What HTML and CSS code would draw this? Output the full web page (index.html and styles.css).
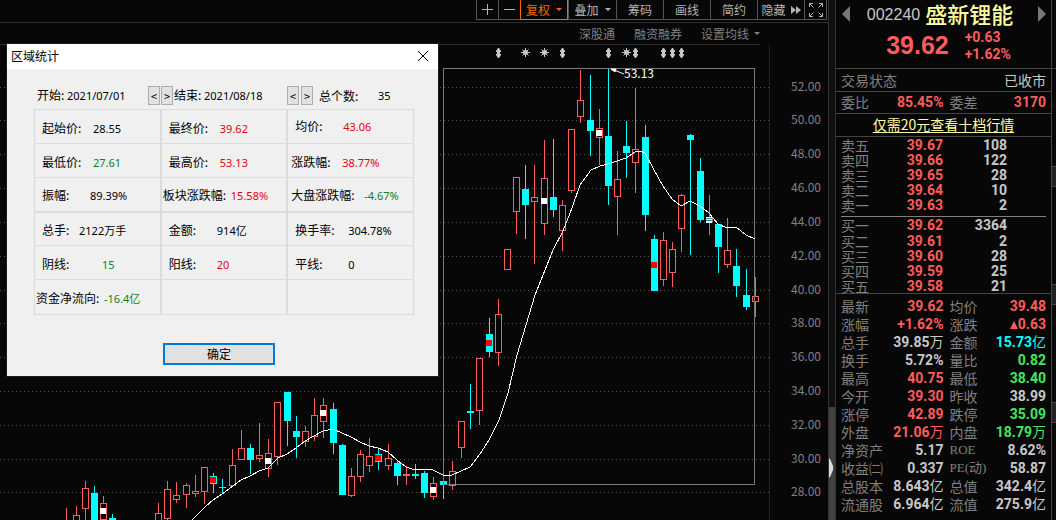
FILE: index.html
```html
<!DOCTYPE html>
<html lang="zh-CN">
<head>
<meta charset="utf-8">
<title>盛新锂能 002240</title>
<link rel="stylesheet" href="styles.css">
</head>
<body>
<div class="app">
  <main class="chart-pane">
    <nav class="toolbar">
      <button class="tool tool-icon" aria-label="放大"><svg width="13" height="13" viewBox="0 0 13 13"><path d="M1 6.5h11M6.5 1v11"/></svg></button>
      <button class="tool tool-icon" aria-label="缩小"><svg width="13" height="13" viewBox="0 0 13 13"><path d="M1 6.5h11"/></svg></button>
      <button class="tool tool-menu tool-active">复权<i class="caret"></i></button>
      <button class="tool tool-menu">叠加<i class="caret"></i></button>
      <button class="tool">筹码</button>
      <button class="tool">画线</button>
      <button class="tool">简约</button>
      <button class="tool tool-hide">隐藏<svg class="solid" width="10" height="8" viewBox="0 0 10 8"><path d="M0 0l5 4-5 4zM5 0l5 4-5 4z"/></svg></button>
      <button class="tool tool-icon" aria-label="全屏"><svg width="14" height="14" viewBox="0 0 14 14"><path d="M.5 4V.5H4M.5.5l4 4M10 .5h3.500V4M13.500.5l-4 4M.5 10v3.500H4M.5 13.500l4-4M10 13.500h3.500V10M13.500 13.500l-4-4"/></svg></button>
    </nav>
    <div class="subbar">
      <div class="links">
        <a href="#sgt">深股通</a>
        <a href="#rzrq">融资融券</a>
        <a href="#ma">设置均线<i class="caret"></i></a>
      </div>
    </div>
    <svg class="chart" id="chart" viewBox="0 45 828 475" preserveAspectRatio="xMaxYMin meet"></svg>

    <section class="dialog" role="dialog" aria-labelledby="dlg-title">
      <header class="dialog-head">
        <span id="dlg-title">区域统计</span>
        <button class="close" aria-label="关闭"><svg width="10" height="10" viewBox="0 0 10 10"><path d="M0 0l10 10M10 0L0 10"/></svg></button>
      </header>
      <div class="dialog-body">
        <div class="period">
          <span class="period-item">开始: <span class="num">2021/07/01</span></span>
          <span class="spin"><button>&lt;</button><button>&gt;</button></span>
          <span class="period-item">结束: <span class="num">2021/08/18</span></span>
          <span class="spin spin-wide"><button>&lt;</button><button>&gt;</button></span>
          <span class="total">总个数:</span><span class="num">35</span>
        </div>
        <table class="stats">
          <tr>
            <td><span class="k k-l">起始价:</span><span class="num">28.55</span></td>
            <td><span class="k k-l">最终价:</span><span class="num red">39.62</span></td>
            <td class="raised"><span class="k k-m">均价:</span><span class="num red">43.06</span></td>
          </tr>
          <tr>
            <td><span class="k k-l">最低价:</span><span class="num green">27.61</span></td>
            <td><span class="k k-l">最高价:</span><span class="num red">53.13</span></td>
            <td class="near"><span class="k k-l">涨跌幅:</span><span class="num red">38.77%</span></td>
          </tr>
          <tr>
            <td><span class="k k-m">振幅:</span><span class="num">89.39%</span></td>
            <td class="flush"><span class="k k-xl">板块涨跌幅:</span><span class="num red">15.58%</span></td>
            <td class="near"><span class="k k-xxl">大盘涨跌幅:</span><span class="num green">-4.67%</span></td>
          </tr>
          <tr class="group">
            <td><span class="k k-s">总手:</span><span class="num">2122万手</span></td>
            <td><span class="k k-m">金额:</span><span class="num">914亿</span></td>
            <td><span class="k k-w">换手率:</span><span class="num">304.78%</span></td>
          </tr>
          <tr>
            <td><span class="k k-xw">阴线:</span><span class="num green">15</span></td>
            <td><span class="k k-m">阳线:</span><span class="num red">20</span></td>
            <td><span class="k k-w">平线:</span><span class="num">0</span></td>
          </tr>
          <tr>
            <td class="flush"><span class="k k-xl">资金净流向:</span><span class="num green">-16.4亿</span></td>
            <td></td>
            <td></td>
          </tr>
        </table>
        <button class="ok">确定</button>
      </div>
    </section>
  </main>

  <div class="gutter"><div class="thumb"><svg width="4" height="20" viewBox="0 0 4 20"><path d="M0 0l1 1 3 7v4l-3 7-1 1z"/></svg></div></div>

  <aside class="quote">
    <header class="head">
      <button class="arrow prev" aria-label="上一只"></button>
      <h1><span class="code">002240</span><span class="name">盛新锂能</span></h1>
      <button class="arrow next" aria-label="下一只"></button>
      <div class="last">
        <span class="price">39.62</span>
        <span class="change"><span>+0.63</span><span>+1.62%</span></span>
      </div>
    </header>
    <div class="line spread"><span class="lb">交易状态</span><span class="state">已收市</span></div>
    <div class="line four"><span class="lb">委比</span><b class="up">85.45%</b><span class="lb">委差</span><b class="up">3170</b></div>
    <div class="line promo"><a href="#level2">仅需20元查看十档行情</a></div>
    <div class="book">
      <table>
        <tr><th>卖五</th><td class="up">39.67</td><td>108</td></tr>
        <tr><th>卖四</th><td class="up">39.66</td><td>122</td></tr>
        <tr><th>卖三</th><td class="up">39.65</td><td>28</td></tr>
        <tr><th>卖二</th><td class="up">39.64</td><td>10</td></tr>
        <tr><th>卖一</th><td class="up">39.63</td><td>2</td></tr>
      </table>
      <table class="bids">
        <tr><th>买一</th><td class="up">39.62</td><td>3364</td></tr>
        <tr><th>买二</th><td class="up">39.61</td><td>2</td></tr>
        <tr><th>买三</th><td class="up">39.60</td><td>28</td></tr>
        <tr><th>买四</th><td class="up">39.59</td><td>25</td></tr>
        <tr><th>买五</th><td class="up">39.58</td><td>21</td></tr>
      </table>
    </div>
    <div class="details">
      <div class="four"><span class="lb">最新</span><b class="up">39.62</b><span class="lb">均价</span><b class="up">39.48</b></div>
      <div class="four"><span class="lb">涨幅</span><b class="up">+1.62%</b><span class="lb">涨跌</span><b class="up"><i class="rise"></i>0.63</b></div>
      <div class="four"><span class="lb">总手</span><b>39.85<span class="unit">万</span></b><span class="lb">金额</span><b class="cyan">15.73<span class="unit">亿</span></b></div>
      <div class="four"><span class="lb">换手</span><b>5.72%</b><span class="lb">量比</span><b class="down">0.82</b></div>
      <div class="four"><span class="lb">最高</span><b class="up">40.75</b><span class="lb">最低</span><b class="down">38.40</b></div>
      <div class="four"><span class="lb">今开</span><b class="up">39.30</b><span class="lb">昨收</span><b>38.99</b></div>
      <div class="four"><span class="lb">涨停</span><b class="up">42.89</b><span class="lb">跌停</span><b class="down">35.09</b></div>
      <div class="four"><span class="lb">外盘</span><b class="up">21.06<span class="unit">万</span></b><span class="lb">内盘</span><b class="down">18.79<span class="unit">万</span></b></div>
      <div class="four"><span class="lb">净资产</span><b>5.17</b><span class="lb serif">ROE</span><b>8.62%</b></div>
      <div class="four"><span class="lb">收益㈡</span><b>0.337</b><span class="lb serif">PE(动)</span><b>58.87</b></div>
      <div class="four"><span class="lb">总股本</span><b>8.643<span class="unit">亿</span></b><span class="lb">总值</span><b>342.4<span class="unit">亿</span></b></div>
      <div class="four"><span class="lb">流通股</span><b>6.964<span class="unit">亿</span></b><span class="lb">流值</span><b>275.9<span class="unit">亿</span></b></div>
    </div>
  </aside>
  <div class="tabs"><i></i><i class="on"></i><i></i><i class="on"></i><i></i><i class="on"></i><i></i></div>
</div>
<script src="chart.js"></script>
</body>
</html>
```
FILE: styles.css
```css
* { box-sizing: border-box; }
body {
  margin: 0;
  background: #070707;
  color: #c8c8c8;
  font: 12px/16px "Noto Sans CJK SC", sans-serif;
}
button {
  margin: 0;
  padding: 0;
  border: 0;
  background: none;
  color: inherit;
  font: inherit;
}
a { color: inherit; text-decoration: none; }
.app {
  display: grid;
  grid-template-columns: minmax(0, 1fr) 8px 216px 4px;
  height: 100vh;
  min-height: 520px;
  overflow: hidden;
}

/* chart pane */
.chart-pane {
  position: relative;
  display: flex;
  flex-direction: column;
  min-width: 0;
  min-height: 0;
}
.toolbar {
  display: flex;
  justify-content: flex-end;
  height: 23px;
  padding: 0 1px 2px 0;
  border-bottom: 1px solid #2c2c2c;
}
.tool {
  display: flex;
  align-items: center;
  justify-content: center;
  width: 47px;
  gap: 5px;
  border: solid #555;
  border-width: 0 0 1px 1px;
  color: #b4b4b4;
}
.tool:last-child { border-right-width: 1px; width: 23px; }
.tool-icon { width: 22px; }
.tool-menu { width: 48px; gap: 6px; }
.tool-active { border-color: #f60; border-right-width: 1px; color: #f60; }
.tool svg { fill: none; stroke: #b4b4b4; }
.tool .solid { fill: #b4b4b4; stroke: none; }
.caret {
  display: inline-block;
  border: solid transparent;
  border-width: 3px 3px 0;
  border-top-color: currentColor;
}
.subbar {
  padding-right: 68px;
  height: 22px;
  color: #808080;
}
.links {
  display: flex;
  justify-content: flex-end;
  gap: 19px;
  height: 22px;
  line-height: 23px;
  border-bottom: 1px solid #2c2c2c;
}
.links a { display: flex; align-items: center; gap: 5px; }
.chart { display: block; width: 100%; flex: 1; min-height: 0; }
.chart text { font-size: 12px; fill: #808080; }
.chart .peak { fill: #fff; }
.frame { fill: none; stroke: #7a7a7a; }
.axis { stroke: #262626; }
.grid { stroke: #505050; stroke-dasharray: 1 3; }
.average { fill: none; stroke: #fff; }
.rising { fill: #070707; stroke: #ff5c5c; }
.falling { fill: #00ffff; stroke: #00ffff; }
.dividend { fill: #c8c8c8; }
.notice { fill: #c8c8c8; stroke: #c8c8c8; }

/* dialog */
.dialog {
  position: absolute;
  left: 7px;
  top: 44px;
  width: 431px;
  background: #f0f0f0;
  color: #000;
  box-shadow: 0 0 0 1px #1c1c1c;
}
.dialog-head {
  display: flex;
  align-items: center;
  justify-content: space-between;
  height: 25px;
  padding: 0 10px 2px 4px;
  background: #fff;
}
.close { display: flex; }
.close svg { stroke: #000; overflow: visible; }
.dialog-body { padding: 16px 24px 11px 27px; }
.num { font-family: "Noto Sans", "Noto Sans CJK SC", sans-serif; font-size: 11px; }
.period {
  display: flex;
  align-items: center;
  height: 21px;
  margin-bottom: 3px;
  padding-left: 3px;
}
.period-item { width: 111px; white-space: nowrap; }
.spin { display: flex; gap: 1px; width: 26px; }
.spin-wide { gap: 2px; width: 32px; }
.period-item + .spin-wide { margin-left: 2px; }
.spin button {
  width: 12px;
  height: 19px;
  border: 1px solid #adadad;
  background: #e1e1e1;
  font-size: 11px;
  line-height: 16px;
}
.total { width: 59px; }
.stats {
  width: 100%;
  table-layout: fixed;
  border-collapse: collapse;
}
.stats td {
  height: 34px;
  padding: 3px 0 0 7px;
  border: solid #dcdcdc;
  border-width: 1px 2px;
  white-space: nowrap;
}
.stats td:first-child { border-left-width: 1px; }
.stats td:last-child { border-right-width: 1px; }
.stats .group td { border-top-width: 2px; }
.stats tr:last-child td { height: 35px; }
.stats .near { padding-left: 3px; }
.stats .flush { padding-left: 1px; }
.stats .raised { padding-top: 0; }
.k { display: inline-block; }
.k-s { width: 37px; }
.k-m { width: 48px; }
.k-l { width: 51px; }
.k-w { width: 53px; }
.k-xw { width: 60px; }
.k-xl { width: 68px; }
.k-xxl { width: 73px; }
.red { color: #e60012; }
.green { color: #118022; }
.ok {
  display: block;
  width: 112px;
  height: 22px;
  margin: 28px auto 0 129px;
  border: 2px solid #0078d7;
  background: #e1e1e1;
}

/* scroll gutter */
.gutter {
  display: flex;
  align-items: flex-end;
  background: #101010;
  border: solid #333;
  border-width: 0 1px;
}
.thumb {
  display: flex;
  align-items: center;
  width: 100%;
  height: 113px;
  padding-top: 8px;
  background: #404040;
}
.thumb svg { fill: #ddd; }

/* quote panel */
.quote { border-right: 1px solid #444; }
.head {
  display: grid;
  grid-template-columns: 8px 1fr 8px;
  grid-template-rows: 28px 36px;
  align-items: center;
  height: 68px;
  padding: 0 5px 0 6px;
}
.head h1 {
  display: flex;
  align-items: center;
  justify-content: center;
  gap: 5px;
  height: 28px;
  margin: 0;
  padding-right: 8px;
  font-weight: 500;
}
.code { font: 16px/28px "Liberation Sans", sans-serif; padding-top: 1px; }
.name { font-size: 22px; line-height: 28px; height: 30px; color: #ffffa0; }
.arrow { border: solid transparent; border-width: 8px 0; width: 8px; height: 16px; }
.prev { border-right: 8px solid #777; }
.next { border-left: 8px solid #777; }
.last {
  grid-column: 1 / -1;
  display: flex;
  align-items: center;
  justify-content: center;
  gap: 16px;
  padding-left: 9px;
  color: #ff5c5c;
}
.price { font: bold 25px/34px "Liberation Sans", sans-serif; padding-bottom: 2px; }
.change { display: flex; flex-direction: column; font: bold 14px/17px Roboto, sans-serif; }
.line {
  height: 23px;
  border-top: 1px solid #444;
  font-size: 14px;
  line-height: 22px;
}
.line.four { height: 22px; line-height: 21px; }
.spread { display: flex; justify-content: space-between; padding-left: 5px; padding-right: 5px; }
.lb { color: #808080; }
.four {
  display: grid;
  grid-template-columns: 42px minmax(0, 1fr) 42px minmax(0, 1fr);
  padding-left: 5px;
  padding-right: 5px;
  white-space: nowrap;
}
.four b, .book td {
  font-family: Roboto, "Noto Sans CJK SC", sans-serif;
  font-weight: 700;
  text-align: right;
}
.unit { font-weight: 400; }
.four .lb:nth-child(3) { padding-left: 6px; }
.quote .up { color: #ff5c5c; }
.quote .down { color: #40e860; }
.quote .cyan { color: #00ffff; }
.promo { text-align: center; color: #ffffa0; line-height: 21px; }
.promo a { text-decoration: underline; text-underline-offset: 2px; }
.book {
  padding: 1px 5px 0;
  border-top: 1px solid #444;
  height: 157px;
}
.book table {
  width: 100%;
  table-layout: fixed;
  border-collapse: collapse;
  font-size: 14px;
}
.book th, .book td { padding: 0; height: 15px; line-height: 15px; }
.book th { width: 42px; color: #808080; font-weight: 400; text-align: left; }
.book td:nth-child(2) { width: 60px; }
.book td:last-child { padding-right: 39px; }
.book .bids { border-top: 1px solid #808080; margin-top: 3px; }
.bids tr:first-child { height: 17px; }
.details { padding-top: 3px; border-top: 1px solid #444; font-size: 14px; line-height: 18px; }
.details .four { height: 18px; }
.serif { font-family: "Liberation Serif", "Noto Sans CJK SC", serif; font-size: 13px; }
.rise {
  display: inline-block;
  border: solid transparent;
  border-width: 0 4px 8px;
  border-bottom-color: currentColor;
}
.tabs { display: flex; flex-direction: column; padding-top: 68px; }
.tabs i { flex: 5; border-top: 1px solid #444; }
.tabs .on { flex: 1; background: #222; }
```
FILE: chart.js
```js
const svg = document.getElementById('chart');
const out = [];

// x, high, body top, body bottom, low, direction, optional marker [y, colour]
const candles = [
  [66, 508, 521, 530, 540, 'u'], [76, 506, 515, 530, 540, 'u'], [85, 481, 488, 509, 520, 'u'],
  [94, 486, 493, 525, 530, 'd'], [103, 496, 503, 520, 525, 'u', [508, '#fff']], [112, 514, 518, 530, 530, 'd'],
  [158, 503, 513, 530, 530, 'u'], [167, 481, 489, 519, 522, 'u'], [176, 482, 495, 500, 503, 'u'],
  [186, 483, 485, 495, 508, 'u'], [195, 475, 491, 494, 497, 'u'], [204, 467, 467, 492, 504, 'u'],
  [213, 473, 476, 484, 493, 'd', [477, '#f00']], [222, 479, 487, 488, 494, 'd'], [232, 449, 465, 486, 486, 'u'],
  [241, 430, 448, 460, 460, 'u'], [250, 444, 448, 460, 474, 'd'], [259, 423, 455, 459, 462, 'u'],
  [268, 439, 453, 469, 477, 'u', [458, '#fff']], [277, 402, 402, 457, 465, 'u'], [287, 392, 392, 421, 446, 'd'],
  [296, 416, 431, 437, 458, 'd'], [305, 426, 431, 442, 447, 'u'], [314, 398, 415, 437, 441, 'u'],
  [323, 398, 405, 422, 438, 'u', [410, '#fff']], [333, 403, 409, 443, 454, 'd'], [342, 444, 445, 495, 495, 'd'],
  [351, 468, 476, 496, 497, 'u'], [360, 450, 454, 477, 482, 'u'], [369, 438, 456, 466, 472, 'u'],
  [378, 448, 454, 462, 470, 'd', [455, '#f00']], [388, 444, 458, 466, 470, 'u'], [397, 460, 463, 476, 485, 'd'],
  [406, 466, 474, 476, 485, 'u'], [415, 464, 474, 476, 479, 'd'], [424, 471, 473, 493, 498, 'd'],
  [433, 477, 483, 497, 500, 'u', [487, '#fff']], [443, 470, 481, 485, 499, 'd'], [452, 461, 471, 486, 490, 'u'],
  [461, 421, 421, 448, 458, 'u'], [470, 384, 411, 413, 429, 'd'], [479, 358, 358, 411, 425, 'u'],
  [489, 318, 334, 352, 357, 'd', [340, '#f00']], [498, 299, 314, 353, 366, 'u'], [507, 249, 249, 270, 270, 'u'],
  [516, 177, 177, 212, 234, 'u'], [525, 165, 189, 205, 239, 'd'], [534, 165, 197, 202, 264, 'u'],
  [544, 140, 178, 224, 235, 'u', [198, '#fff']], [553, 139, 197, 210, 217, 'd'], [562, 200, 205, 231, 251, 'u'],
  [571, 129, 129, 191, 193, 'u'], [580, 70, 100, 117, 123, 'u'], [590, 75, 120, 131, 156, 'd'],
  [599, 109, 128, 138, 165, 'u', [130, '#fff']], [608, 68, 136, 186, 205, 'd'], [617, 151, 179, 197, 235, 'u'],
  [626, 121, 146, 153, 178, 'd'], [635, 88, 149, 163, 193, 'u'], [645, 125, 137, 215, 231, 'd'],
  [654, 235, 239, 291, 291, 'd', [262, '#f00']], [663, 232, 240, 280, 286, 'u'], [672, 242, 249, 273, 287, 'u'],
  [681, 194, 195, 229, 252, 'u'], [690, 134, 135, 140, 255, 'd'], [700, 158, 171, 220, 222, 'd'],
  [709, 195, 217, 222, 235, 'u', [217, '#fff']], [718, 224, 224, 247, 273, 'd'], [727, 218, 250, 265, 268, 'u'],
  [736, 249, 266, 286, 297, 'd'], [746, 269, 295, 307, 310, 'd'], [755, 277, 296, 302, 317, 'u']
];

const average = '192,520 205,507 213,500 222,494 241,480 250,476 259,471 268,468 278,458 287,454 296,448 305,441 ' +
  '314,436 323,431 333,429 342,433 351,437 360,442 369,446 378,448 388,452 397,460 406,467 415,470 424,469 433,470 ' +
  '443,475 452,475 470,467 480,454 489,440 499,420 508,393 517,355 526,325 535,295 545,270 553,250 563,231 572,208 ' +
  '580,185 591,170 600,166 608,164 617,161 626,158 635,152 640,151 645,153 654,170 663,186 672,199 681,206 690,201 ' +
  '700,206 709,213 718,224 727,228 736,227 746,235 755,239';

// price grid and scale
[87, 120, 154, 188, 222, 256, 290, 323, 357, 391, 425, 459, 492].forEach((y, i) => {
  out.push(`<path class="grid" d="M0 ${y + 0.5}H772"/>`);
  out.push(`<text x="791" y="${y + 4}">${52 - i * 2}.00</text>`);
});
out.push('<path class="axis" d="M769.5 23V520"/>');

for (const [x, high, top, bottom, low, dir, mark] of candles) {
  const c = x + 0.5;
  const cls = dir === 'u' ? 'rising' : 'falling';
  const height = Math.max(bottom - top - 1, 0.01);
  out.push(`<g class="${cls}" shape-rendering="crispEdges"><path d="M${c} ${high}V${low}"/>` +
    `<rect x="${x - 2.5}" y="${top + 0.5}" width="6" height="${height}"/></g>`);
  if (mark) {
    out.push(`<rect x="${x - 3}" y="${mark[0]}" width="6" height="6" fill="${mark[1]}"/>`);
  }
}
out.push('<path d="M706 218.500H712M706 220.500H712" stroke="#1899a8"/>');
out.push('<rect class="frame" x="443.5" y="68.5" width="311" height="416"/>');
out.push(`<polyline class="average" shape-rendering="crispEdges" points="${average}"/>`);

// event marks above the plot
[498, 562, 608, 635, 663, 672, 681].forEach(x => {
  out.push(`<path class="dividend" d="M${x} 48h1l2 3v1h-1v2h1v1l-2 3h-1l-2-3v-1h1v-2h-1v-1z"/>`);
});
[525, 544, 626].forEach(x => {
  out.push(`<g class="notice"><circle cx="${x + 0.5}" cy="52.500" r="2"/>` +
    `<path d="M${x - 4} 52.500h9M${x + 0.5} 48v9M${x - 2.5} 49.500l6 6M${x + 3.5} 49.500l-6 6"/></g>`);
});
out.push('<path d="M611 69l5 0-1 3zM614 70l10 4" fill="#fff" stroke="#fff"/>');
out.push('<text class="peak" x="624" y="78">53.13</text>');

svg.innerHTML = out.join('');
```
